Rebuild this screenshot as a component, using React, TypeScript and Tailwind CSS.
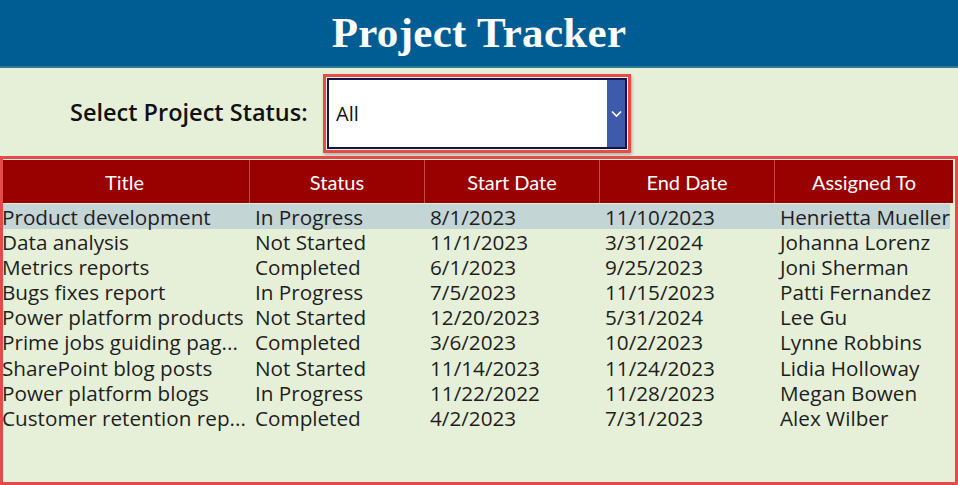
import React from "react";

const rows = [
  ["Product development", "In Progress", "8/1/2023", "11/10/2023", "Henrietta Mueller"],
  ["Data analysis", "Not Started", "11/1/2023", "3/31/2024", "Johanna Lorenz"],
  ["Metrics reports", "Completed", "6/1/2023", "9/25/2023", "Joni Sherman"],
  ["Bugs fixes report", "In Progress", "7/5/2023", "11/15/2023", "Patti Fernandez"],
  ["Power platform products", "Not Started", "12/20/2023", "5/31/2024", "Lee Gu"],
  ["Prime jobs guiding pag...", "Completed", "3/6/2023", "10/2/2023", "Lynne Robbins"],
  ["SharePoint blog posts", "Not Started", "11/14/2023", "11/24/2023", "Lidia Holloway"],
  ["Power platform blogs", "In Progress", "11/22/2022", "11/28/2023", "Megan Bowen"],
  ["Customer retention rep...", "Completed", "4/2/2023", "7/31/2023", "Alex Wilber"],
];

const headers = ["Title", "Status", "Start Date", "End Date", "Assigned To"];

export default function App() {
  return (
    <div className="w-[958px] h-[485px] overflow-hidden bg-[#E6F0D9] flex flex-col">
      <div className="h-[68px] bg-[#005D93] flex items-center justify-center border-b-2 border-[#2F7C8E] shrink-0">
        <h1
          className="text-white font-bold text-[43px] leading-none tracking-[0.3px] mt-[-2px]"
          style={{ fontFamily: '"Liberation Serif", serif' }}
        >
          Project Tracker
        </h1>
      </div>
      <div className="h-[88px] flex items-center pl-[70px] shrink-0" style={{ fontFamily: '"Open Sans", sans-serif' }}>
        <span className="text-[23.5px] font-semibold text-[#111] w-[253px] mt-[1px]">Select Project Status:</span>
        <div className="w-[308px] h-[79px] border-[3px] border-[#E64B4B] p-px shadow-[1px_2px_3px_rgba(0,0,0,0.25)] mt-[3px]">
          <div className="w-full h-full border-2 border-[#14144A] bg-white flex items-stretch">
            <div className="flex-1 flex items-center pl-[7px] text-[20px] text-[#111]">All</div>
            <div className="w-[18px] bg-[#3D5BAA] flex items-center justify-center">
              <svg width="11" height="8" viewBox="0 0 11 8" fill="none">
                <path d="M1 1.5 L5.5 6 L10 1.5" stroke="white" strokeWidth="1.6" />
              </svg>
            </div>
          </div>
        </div>
      </div>
      <div className="relative flex-1" style={{ fontFamily: '"Open Sans", sans-serif' }}>
        <div className="pt-[4px] overflow-hidden h-full">
          <div
            className="grid grid-cols-[250px_175px_175px_175px_178px] h-[43px] bg-[#990000] text-white text-[20px] w-[953px]"
            style={{ fontFamily: 'Lato, sans-serif' }}
          >
            {headers.map((h, i) => (
              <div
                key={h}
                className={
                  "flex items-center justify-center " + (i < 4 ? "border-r border-[#C24A4A]" : "")
                }
              >
                {h}
              </div>
            ))}
          </div>
          <div className="pt-[1px]">
            {rows.map((r, ri) => (
              <div
                key={ri}
                className={
                  "grid grid-cols-[250px_175px_175px_175px_175px] h-[25.1px] items-start text-[20.7px] text-[#1E1E1E] w-[950px] " +
                  (ri === 0 ? "bg-[#C4D5D6]" : "")
                }
              >
                {r.map((c, ci) => (
                  <div
                    key={ci}
                    className={"whitespace-nowrap leading-[22px] pt-[2px] " + (ci === 0 ? "pl-[2px]" : "pl-[5px]")}
                  >
                    {c}
                  </div>
                ))}
              </div>
            ))}
          </div>
        </div>
        <div className="absolute inset-0 border-[3px] border-[#E64B4B] pointer-events-none" />
      </div>
    </div>
  );
}
